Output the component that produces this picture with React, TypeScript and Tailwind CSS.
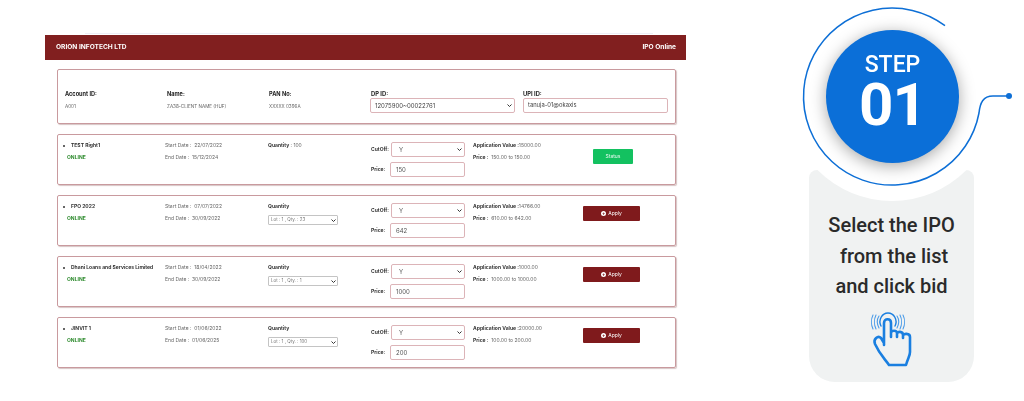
const rows = [
  { name: "FPO 2022", start: "07/07/2022", end: "30/09/2022", lot: "Lot : 1 , Qty. : 23", price: "642", value: "14766.00", range: "610.00 to 642.00" },
  { name: "Dhani Loans and Services Limited", start: "18/04/2022", end: "30/09/2022", lot: "Lot : 1 , Qty. : 1", price: "1000", value: "1000.00", range: "1000.00 to 1000.00" },
  { name: "JINVIT 1", start: "01/06/2022", end: "01/06/2025", lot: "Lot : 1 , Qty. : 100", price: "200", value: "20000.00", range: "100.00 to 200.00" },
];

function Chevron() {
  return (
    <svg viewBox="0 0 10 6" className="w-[5px] h-[3px] shrink-0" fill="none" stroke="#333" strokeWidth="2">
      <path d="M1 1l4 4 4-4" />
    </svg>
  );
}

function CutoffPrice({ price }: { price: string }) {
  return (
    <div className="w-[102px] shrink-0 flex flex-col gap-[5px]">
      <div className="flex items-center h-[15px]">
        <span className="w-[20px] shrink-0 text-[5px] font-bold text-[#333]">CutOff:</span>
        <div className="w-[74px] h-[15px] rounded-[2px] border-[1.5px] border-[#dcb4b8] flex items-center justify-between pl-[7px] pr-[2px] text-[6px] text-[#555]">
          Y
          <Chevron />
        </div>
      </div>
      <div className="flex items-center h-[15px]">
        <span className="w-[19px] shrink-0 text-[5px] font-bold text-[#333]">Price:</span>
        <div className="w-[75px] h-[15px] rounded-[2px] border-[1.5px] border-[#dcb4b8] flex items-center pl-[5px] text-[6px] text-[#555]">
          {price}
        </div>
      </div>
    </div>
  );
}

function IpoTitle({ name, start, end }: { name: string; start: string; end: string }) {
  return (
    <>
      <div className="w-[107px] shrink-0 pt-[7px] pl-[5px]">
        <div className="flex items-center gap-[6px] text-[5px] font-bold text-[#333] whitespace-nowrap leading-[7px]">
          <span className="w-[2px] h-[2px] rounded-full bg-[#333]" />
          {name}
        </div>
        <div className="mt-[5px] pl-[4px] text-[5px] font-bold text-[#2e8b2e] leading-[7px]">ONLINE</div>
      </div>
      <div className="w-[103px] shrink-0 pt-[7px] text-[5px] text-[#666] leading-[7px]">
        <div>Start Date :&nbsp; {start}</div>
        <div className="mt-[5px]">End Date :&nbsp; {end}</div>
      </div>
    </>
  );
}

function HandIcon() {
  return (
    <svg viewBox="0 0 60 70" className="w-[60px] h-[70px]" fill="none" stroke="#1a7fe0" strokeLinecap="round" strokeLinejoin="round">
      <g strokeWidth="1.1" stroke="#4a9be8">
        <path d="M13 10c-2 4-2 10 0 14" />
        <path d="M16 10c-2 4-2 10 0 14" />
        <path d="M19 11c-2 3-2 8 0 12" />
        <path d="M37 11c2 3 2 8 0 12" />
        <path d="M40 10c2 4 2 10 0 14" />
        <path d="M43 10c2 4 2 10 0 14" />
        <path d="M21 21c-3-6 1-13 7-13s10 7 7 13" strokeWidth="1.4" stroke="#1a7fe0" />
      </g>
      <path
        d="M24 40V18c0-5 7-5 7 0v14M31 28c0-3 6-3 6 0v4M37 29c0-3 6-3 6 1v3M43 31c0-3 7-3 7 1v15c0 4-2 6-4 13H29c-4-6-9-10-14-21-2-5 3-9 6-6l3 5"
        strokeWidth="2.6"
      />
    </svg>
  );
}

export default function App() {
  return (
    <div className="w-[1024px] h-[401px] bg-white flex overflow-hidden font-['Inter',sans-serif]">
      <div className="w-[641px] ml-[45px] mt-[33px] shrink-0 blur-[0.4px]">
        <div className="h-[1px] ml-[40px] w-[568px] bg-[#eeeef6]" />
        <div className="h-[25px] mt-[1px] bg-[#811f1f] flex items-center justify-between pl-[11px] pr-[10px] text-white text-[6.6px] font-bold">
          <span>ORION INFOTECH LTD</span>
          <span>IPO Online</span>
        </div>

        <div className="mx-[12px] mt-[9px] flex flex-col gap-[10px] w-[619px]">
          <div className="h-[55px] rounded-[2px] border border-[#c99a9e] shadow-[1px_1px_1px_rgba(120,60,60,0.3)] flex pl-[7px] pt-[19px]">
            <div className="w-[102px] shrink-0">
              <div className="text-[5.6px] font-bold text-[#222] leading-[10px]">Account ID:</div>
              <div className="mt-[4px] text-[4.6px] text-[#666] leading-[8px]">A001</div>
            </div>
            <div className="w-[102px] shrink-0">
              <div className="text-[5.6px] font-bold text-[#222] leading-[10px]">Name:</div>
              <div className="mt-[4px] text-[4.6px] text-[#666] leading-[8px]">ZA38-CLIENT NAME (HUF)</div>
            </div>
            <div className="w-[102px] shrink-0">
              <div className="text-[5.6px] font-bold text-[#222] leading-[10px]">PAN No:</div>
              <div className="mt-[4px] text-[4.6px] text-[#666] leading-[8px]">XXXXX 0396A</div>
            </div>
            <div className="w-[152px] shrink-0">
              <div className="text-[5.8px] font-bold text-[#222] leading-[9px]">DP ID:</div>
              <div className="-ml-[1px] w-[145px] h-[15px] rounded-[2px] border-[1.5px] border-[#dcb4b8] flex items-center justify-between pl-[4px] pr-[2px] text-[6px] text-[#444]">
                12075900~00022761
                <Chevron />
              </div>
            </div>
            <div className="w-[145px] shrink-0">
              <div className="text-[5.8px] font-bold text-[#222] leading-[9px]">UPI ID:</div>
              <div className="w-[145px] h-[15px] rounded-[2px] border-[1.5px] border-[#dcb4b8] flex items-center pl-[4px] text-[5.8px] text-[#444]">
                tanuja-01@okaxis
              </div>
            </div>
          </div>

          <div className="h-[51px] rounded-[2px] border border-[#c99a9e] shadow-[1px_1px_1px_rgba(120,60,60,0.3)] flex">
            <IpoTitle name="TEST Right1" start="22/07/2022" end="15/12/2024" />
            <div className="w-[103px] shrink-0 pt-[7px] text-[5px] leading-[7px] text-[#666]">
              <b className="text-[#333]">Quantity</b> : 100
            </div>
            <div className="pt-[7px] shrink-0 flex">
              <CutoffPrice price="150" />
            </div>
            <div className="w-[120px] shrink-0 pt-[7px] text-[5px] leading-[7px] text-[#666]">
              <div><b className="text-[#333]">Application Value :</b>15000.00</div>
              <div className="mt-[5px]"><b className="text-[#333]">Price :</b>&nbsp; 150.00 to 150.00</div>
            </div>
            <div className="pt-[5px] shrink-0">
              <button type="button" className="w-[40px] h-[15px] rounded-[1px] bg-[#13c160] text-white/90 text-[5px]">Status</button>
            </div>
          </div>

          {rows.map((r) => (
            <div key={r.name} className="h-[51px] rounded-[2px] border border-[#c99a9e] shadow-[1px_1px_1px_rgba(120,60,60,0.3)] flex">
              <IpoTitle name={r.name} start={r.start} end={r.end} />
              <div className="w-[103px] shrink-0 pt-[7px]">
                <div className="text-[5px] font-bold text-[#333] leading-[7px]">Quantity</div>
                <div className="mt-[5px] w-[70px] h-[10px] rounded-[1px] border border-[#c4c4c4] flex items-center justify-between pl-[2px] pr-[1.5px] text-[4.5px] text-[#777]">
                  {r.lot}
                  <Chevron />
                </div>
              </div>
              <div className="pt-[7px] shrink-0 flex">
                <CutoffPrice price={r.price} />
              </div>
              <div className="w-[110px] shrink-0 pt-[7px] text-[5px] leading-[7px] text-[#666]">
                <div><b className="text-[#333]">Application Value :</b>{r.value}</div>
                <div className="mt-[5px]"><b className="text-[#333]">Price :</b>&nbsp; {r.range}</div>
              </div>
              <div className="pt-[10px] shrink-0">
                <button type="button" className="w-[57px] h-[15px] rounded-[1px] bg-[#7f1a1c] text-white text-[5px] flex items-center justify-center gap-[2px]">
                  <span className="w-[5px] h-[5px] rounded-full bg-white text-[#7f1a1c] text-[5px] leading-[5px] font-bold">+</span>
                  Apply
                </button>
              </div>
            </div>
          ))}
        </div>
      </div>

      <div className="ml-[123px] mt-[170px] w-[165px] h-[212px] shrink-0 relative font-['Roboto',sans-serif] blur-[0.3px]">
        <div className="w-full h-full bg-[#f0f2f2] rounded-t-[8px] rounded-b-[26px] flex flex-col items-center pt-[40px]">
          <div className="text-[20px] leading-[30.5px] font-medium text-[#2a2a2a] text-center">
            <div>Select the IPO</div>
            <div className="pl-[5px]">from the list</div>
            <div>and click bid</div>
          </div>
        </div>
        <div className="absolute left-[51px] top-[135px]">
          <HandIcon />
        </div>

        {/* white cut-out, ring and blue badge sit over the top of the panel */}
        <div className="absolute left-[-22px] top-[-179px] w-[210px] h-[210px] rounded-full bg-white" />
        <svg className="absolute left-[-19px] top-[-170px] w-[234px] h-[190px] overflow-visible" viewBox="0 0 234 190" fill="none" stroke="#0d6fd6" strokeWidth="1.5">
          <path d="M155 25.7A88.5 88.5 0 1 0 189 113C190 103 193 96 203 96H219" />
          <circle cx="219" cy="96" r="3" fill="#0d6fd6" stroke="none" />
        </svg>
        <div className="absolute left-[17px] top-[-140px] w-[133px] h-[133px] rounded-full bg-[#0b6fd8] shadow-[0_3px_16px_rgba(0,0,0,0.35)] flex flex-col items-center text-white pt-[22px]">
          <div className="text-[23px] leading-[26px] font-medium">STEP</div>
          <div className="mt-[2px] text-[60px] leading-[50px] font-bold tracking-[-1px]">01</div>
        </div>
      </div>
    </div>
  );
}
